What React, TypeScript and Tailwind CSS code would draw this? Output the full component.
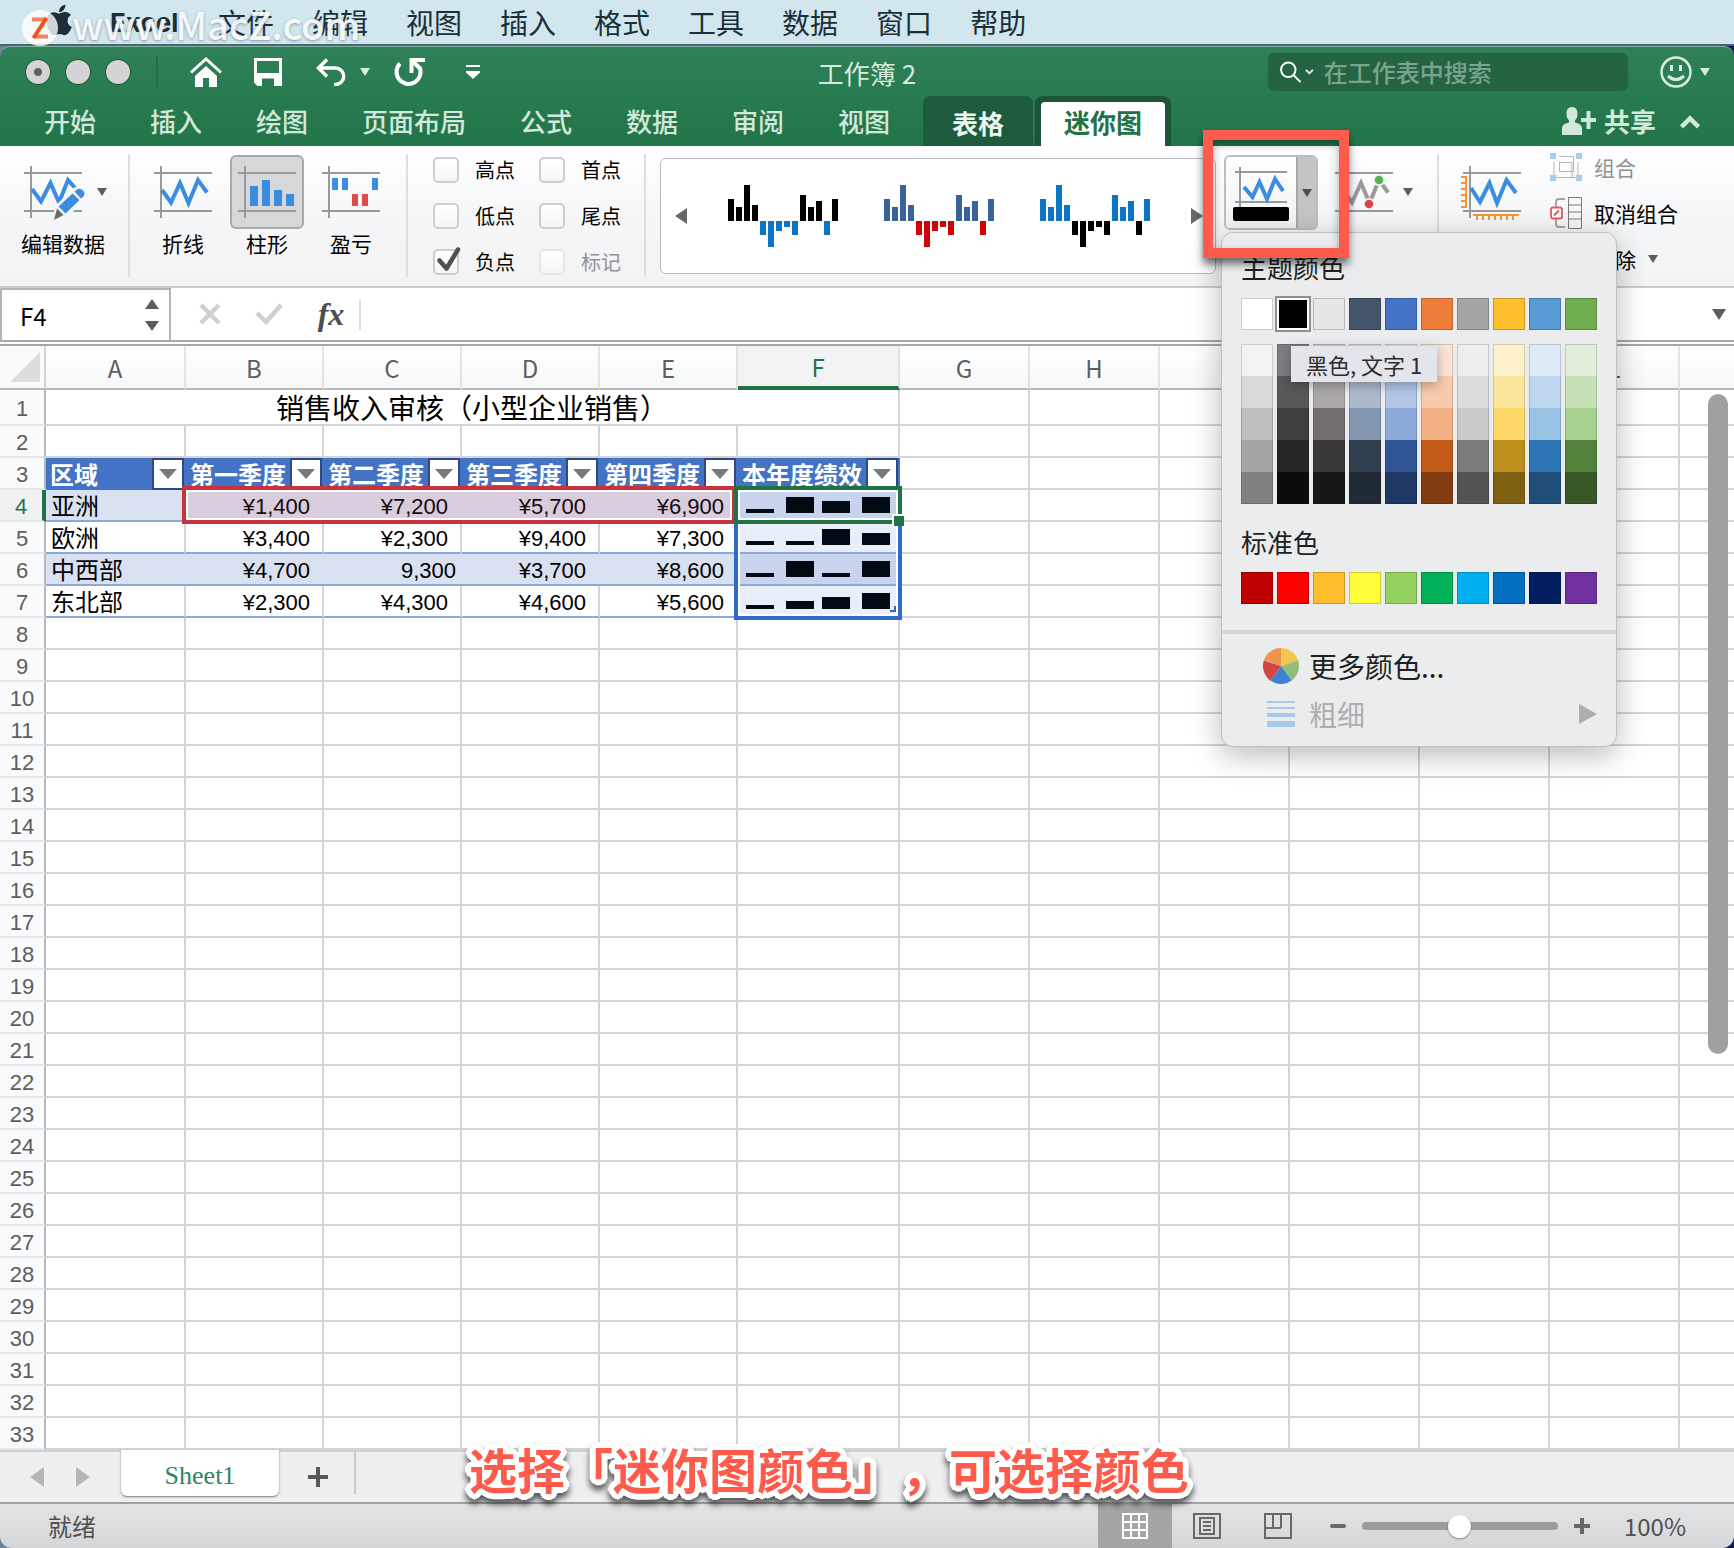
import React, { useState } from 'react';
import clsx from 'clsx';
import { FaApple } from 'react-icons/fa';

const menus = ['文件', '编辑', '视图', '插入', '格式', '工具', '数据', '窗口', '帮助'];
const ribbonTabs = ['开始', '插入', '绘图', '页面布局', '公式', '数据', '审阅', '视图'];

const columns = ['A', 'B', 'C', 'D', 'E', 'F', 'G', 'H', 'I', 'J', 'K', 'L', 'M', 'N', 'O', 'P', 'Q', 'R'];
const rowNumbers = Array.from({ length: 33 }, (_, i) => i + 1);
const tableHeaders = ['区域', '第一季度', '第二季度', '第三季度', '第四季度', '本年度绩效'];

interface SalesRow {
  region: string;
  values: string[];
  bars: number[]; // sparkline column heights
}

const sales: SalesRow[] = [
  { region: '亚洲', values: ['¥1,400', '¥7,200', '¥5,700', '¥6,900'], bars: [4, 16, 12, 16] },
  { region: '欧洲', values: ['¥3,400', '¥2,300', '¥9,400', '¥7,300'], bars: [4, 4, 16, 12] },
  { region: '中西部', values: ['¥4,700', '9,300', '¥3,700', '¥8,600'], bars: [4, 16, 4, 16] },
  { region: '东北部', values: ['¥2,300', '¥4,300', '¥4,600', '¥5,600'], bars: [4, 8, 12, 16] },
];

const themeColors = ['#ffffff', '#000000', '#e6e6e8', '#44546a', '#4472c4', '#ed7d38', '#a4a5a6', '#fdbf2b', '#5b9bd5', '#6fad4f'];
const themeShades = [
  ['#f1f2f4', '#d8d9db', '#bdbec0', '#a4a5a7', '#7f8081'],
  ['#7e7f81', '#57585a', '#3e3f41', '#252628', '#0b0c0e'],
  ['#cfcdcd', '#aca8a9', '#747071', '#3a3839', '#171618'],
  ['#d5dce4', '#acb9ca', '#8496b0', '#31404f', '#212b35'],
  ['#d9e2f3', '#b3c6e7', '#8eaadb', '#2e5496', '#1f3764'],
  ['#fbe4d5', '#f6caad', '#f3b083', '#c45a17', '#823c10'],
  ['#ecedee', '#dadbdc', '#c8c9ca', '#7b7c7d', '#525354'],
  ['#fef2cc', '#fbe59b', '#fdd869', '#bd901c', '#7e6010'],
  ['#deebf7', '#bdd7ee', '#9bc3e6', '#2d75b5', '#1f4e79'],
  ['#e1efda', '#c5e1b5', '#a7d18f', '#52823a', '#375726'],
];
const standardColors = ['#be0000', '#fd0000', '#fdbf2b', '#fefe3a', '#93d05d', '#02b057', '#02b0ef', '#026fc0', '#022060', '#7030a0'];

const galleryBars = [22, 14, 36, 16, -14, -26, -10, -6, -14, 26, 14, 20, -14, 22];
const galleryStyles = [
  { up: '#000000', down: '#0b74c4' },
  { up: '#3a6499', down: '#d00408' },
  { up: '#0b74c4', down: '#000000' },
];

function Caret({ className }: { className?: string }) {
  return (
    <svg viewBox="0 0 10 8" className={clsx('h-2 w-2.5', className)} fill="currentColor">
      <path d="M0 0h10L5 8z" />
    </svg>
  );
}

// Axis frame shared by the sparkline icons
function AxisIcon({ children }: { children: React.ReactNode }) {
  return (
    <svg viewBox="0 0 58 52" className="h-[52px] w-[58px] shrink-0 overflow-visible" fill="none">
      <path d="M0 7h58M0 45h58M7 0v52" stroke="#98999b" strokeWidth="2" />
      {children}
    </svg>
  );
}

function EditDataIcon() {
  return (
    <AxisIcon>
      <path d="M8 23l9 12.500L26.500 17 35 36.500 44 14l8 9" stroke="#3b8de0" strokeWidth="4" />
      <path d="M27 56l5-17 19-18h12v12L43 51z" fill="#f5f6f8" />
      <path d="M48.500 27.500l7 6.500L41.500 47.500l-7-7z" fill="#3b8de0" />
      <path d="M50.500 25.500l2-1.500a4.800 4.800 0 0 1 6.500 7l-2 1.500z" fill="#3b8de0" />
      <path d="M33 42.500l6.500 6.500L30 54z" fill="#6a6b6d" />
    </AxisIcon>
  );
}

function LineIcon() {
  return (
    <AxisIcon>
      <path d="M8 24l9 12.500L26 17l8.500 20L44 14l9 12.500" stroke="#3b8de0" strokeWidth="4" />
    </AxisIcon>
  );
}

function ColumnIcon() {
  return (
    <AxisIcon>
      <path d="M12 20h8v20h-8zM24 14h8v26h-8zM36 24h8v16h-8zM48 28h8v12h-8z" fill="#3b8de0" />
    </AxisIcon>
  );
}

function WinLossIcon() {
  return (
    <AxisIcon>
      <path d="M10 12h6v12h-6zM20 12h6v12h-6zM50 12h6v12h-6z" fill="#3b8de0" />
      <path d="M30 28h6v12h-6zM40 28h6v12h-6z" fill="#df4a4d" />
    </AxisIcon>
  );
}

function TypeButton({ label, active, children }: { label: string; active?: boolean; children: React.ReactNode }) {
  return (
    <button className="flex w-[74px] flex-col items-center">
      <span
        className={clsx(
          'flex h-[74px] w-full items-center justify-center rounded-md border-2',
          active ? 'border-[#a8a9ab] bg-[#d6d7d9]' : 'border-transparent'
        )}
      >
        {children}
      </span>
      <span className="text-[21px] leading-7">{label}</span>
    </button>
  );
}

function PointCheckbox({ label, defaultChecked, disabled }: { label: string; defaultChecked?: boolean; disabled?: boolean }) {
  return (
    <label className={clsx('flex h-[26px] items-center gap-4 text-xl leading-6', disabled && 'text-[#919294]')}>
      <span className="relative flex">
        <input
          type="checkbox"
          defaultChecked={defaultChecked}
          disabled={disabled}
          className="peer size-[26px] appearance-none rounded-[5px] border-2 border-[#cdced0] bg-linear-to-b from-white to-[#f4f5f7] disabled:border-[#e4e5e7]"
        />
        <svg viewBox="0 0 28 28" className="pointer-events-none absolute left-0 -top-0.5 hidden size-7 peer-checked:block" fill="none">
          <path d="M6.500 13.500l7 8L25 2.500" stroke="#4e4f51" strokeWidth="4.500" strokeLinecap="round" strokeLinejoin="round" />
        </svg>
      </span>
      {label}
    </label>
  );
}

function GallerySparkline({ up, down }: { up: string; down: string }) {
  return (
    <button>
      <svg viewBox="0 0 110 62" className="h-[62px] w-[110px]">
        {galleryBars.map((v, i) => (
          <rect key={i} x={i * 8} y={v > 0 ? 36 - v : 36} width="6" height={Math.abs(v)} fill={v > 0 ? up : down} />
        ))}
      </svg>
    </button>
  );
}

function ColorMenu() {
  return (
    <div className="absolute -left-[3px] top-[77px] z-20 w-[396px] rounded-xl border border-[#bfc0c2] bg-[#ebeced] pb-2 text-[#1e1f21] shadow-[0_8px_30px_rgba(0,0,0,0.28)]">
      <div className="px-[19px] pt-[18px]">
        <h3 className="text-[26px] leading-8">主题颜色</h3>
        <div className="mt-[15px] flex gap-1">
          {themeColors.map((c, i) => (
            <button
              key={c}
              aria-label={c}
              className={clsx(
                'size-8',
                i === 1 ? 'border-2 border-white outline-2 outline-[#8f9092]' : 'border border-black/20'
              )}
              style={{ backgroundColor: c }}
            />
          ))}
        </div>
        <div className="relative mt-3.5 flex gap-1">
          {themeShades.map((shades) => (
            <div key={shades[0]} className="flex w-8 flex-col">
              {shades.map((c) => (
                <button key={c} aria-label={c} className="h-8 border-x border-black/15 first:border-t last:border-b" style={{ backgroundColor: c }} />
              ))}
            </div>
          ))}
          <div role="tooltip" className="absolute left-[50px] top-0.5 flex h-9 w-[146px] items-center justify-center bg-[#e3e5ea] text-[22px] leading-7 text-[#2b2c2e] shadow-[0_3px_12px_rgba(0,0,0,0.3)]">
            黑色, 文字 1
          </div>
        </div>
        <h3 className="mt-[22px] text-[26px] leading-8">标准色</h3>
        <div className="mt-3.5 flex gap-1">
          {standardColors.map((c) => (
            <button key={c} aria-label={c} className="size-8 border border-black/20" style={{ backgroundColor: c }} />
          ))}
        </div>
      </div>
      <div className="mt-[26px] h-1 bg-[#d4d5d7]" />
      <button className="mt-2 flex h-12 w-full items-center gap-2.5 pl-[41px] text-[28px] leading-9">
        <svg viewBox="-18 -18 36 36" className="size-9">
          <path d="M0 0V-18A18 18 0 0 1 17.100-5.600z" fill="#f0c84e" />
          <path d="M0 0L17.100-5.600A18 18 0 0 1 10.600 14.600z" fill="#93be77" />
          <path d="M0 0L10.600 14.600A18 18 0 0 1-10.600 14.600z" fill="#3d82cf" />
          <path d="M0 0L-10.600 14.600A18 18 0 0 1-17.100-5.600z" fill="#d24545" />
          <path d="M0 0L-17.100-5.600A18 18 0 0 1 0-18z" fill="#ef9450" />
        </svg>
        更多颜色...
      </button>
      <button disabled className="flex h-12 w-full items-center gap-3.5 pl-[45px] pr-[19px] text-[28px] leading-9 text-[#adaeb0]">
        <svg viewBox="0 0 28 28" className="size-7" fill="#a9c9e8">
          <path d="M0 1h28v2H0zM0 7h28v2H0zM0 13h28v4H0zM0 21h28v6H0z" />
        </svg>
        粗细
        <svg viewBox="0 0 18 20" className="ml-auto h-5 w-[18px]" fill="currentColor">
          <path d="M0 0v20l18-10z" />
        </svg>
      </button>
    </div>
  );
}

function MenuBar() {
  return (
    <nav className="relative flex h-[46px] items-center gap-[38px] border-b-2 border-[#4b6280] bg-[#d1e6ed] pl-[46px] text-[28px] text-[#1c2f38]">
      <FaApple className="-mt-1 h-9 w-[26px]" />
      <a href="#" className="w-[70px] font-['Inter','Noto_Sans_CJK_SC',sans-serif] text-[26px] font-bold">Excel</a>
      {menus.map((m) => (
        <a key={m} href="#" className="leading-10">{m}</a>
      ))}
      {/* Site watermark */}
      <div className="pointer-events-none absolute left-[22px] top-0 flex items-center gap-3.5 text-white/90">
        <span className="mt-2 flex size-9 items-center justify-center rounded-full bg-white/80">
          <svg viewBox="0 0 18 22" className="h-[22px] w-[18px]" fill="none" stroke="#f4511e" strokeWidth="4">
            <path d="M1 2.500h14M3 19.500h14" opacity="0.7" />
            <path d="M15.500 1L2.500 21" />
          </svg>
        </span>
        <span className="text-[38px] leading-[48px] font-medium [text-shadow:0_1px_3px_rgba(60,80,90,0.5)]">www.MacZ.com</span>
      </div>
    </nav>
  );
}

function TitleBar() {
  return (
    <header className="overflow-hidden rounded-t-[10px] border-t border-[#7fb698] bg-linear-to-b from-[#2f8057] to-[#217548]">
      <div className="relative flex h-[49px] items-center text-white">
        <div className="flex items-center gap-4 pl-[26px]">
          <button aria-label="关闭" className="flex size-6 items-center justify-center rounded-full bg-[#d6d3d6] ring-1 ring-[#1d5b3c]">
            <span className="size-2 rounded-full bg-[#5e5f61]" />
          </button>
          <button aria-label="最小化" className="size-6 rounded-full bg-[#d6d3d6] ring-1 ring-[#1d5b3c]" />
          <button aria-label="缩放" className="size-6 rounded-full bg-[#d6d3d6] ring-1 ring-[#1d5b3c]" />
        </div>
        <div className="ml-[26px] h-8 w-0.5 bg-[#27694a]" />
        <button aria-label="主页" className="ml-8">
          <svg viewBox="0 0 32 30" className="h-[30px] w-8" fill="none">
            <path d="M1 15.500L16 2l15 13.500" stroke="#fff" strokeWidth="3" />
            <path d="M5 19L16 9l11 10v11h-8v-9h-6v9H5z" fill="#fff" />
          </svg>
        </button>
        <button aria-label="保存" className="ml-8">
          <svg viewBox="0 0 28 28" className="size-7" fill="none">
            <path d="M1.500 1.500h25v25H4l-2.500-2.500z" stroke="#fff" strokeWidth="3" />
            <path d="M2 15h24v11H2z" fill="#fff" />
            <path d="M8 28v-7.500h12V28h-3v-4h-4v4z" fill="#297b52" />
            <path d="M13 24h4v4h-4z" fill="#297b52" />
          </svg>
        </button>
        <button aria-label="撤销" className="ml-[34px]">
          <svg viewBox="0 0 30 28" className="h-7 w-[30px]" fill="none" stroke="#fff" strokeWidth="3.500">
            <path d="M11 1.500L2.500 10 11 18.500M3 10h16.500a8.200 8.200 0 0 1 0 16.500H18" />
          </svg>
        </button>
        <Caret className="ml-3.5 text-[#d9ebe0]" />
        <button aria-label="恢复" className="ml-6">
          <svg viewBox="0 0 32 30" className="h-[30px] w-8" fill="none" stroke="#fff" strokeWidth="4">
            <path d="M6 6.500a12 12 0 1 0 19.500 3.500" />
            <path d="M17.500 16V3H31" />
            <path d="M17.500 3l8 8" />
          </svg>
        </button>
        <button aria-label="自定义快速访问工具栏" className="ml-10">
          <svg viewBox="0 0 14 14" className="size-3.5" fill="#fff">
            <path d="M0 0h14v2H0zM0 6h14v1.500L7 14 0 7.500z" />
          </svg>
        </button>
        <div className="pointer-events-none absolute inset-0 flex items-center justify-center pt-0.5 text-[26px] text-[#d9ebe0]">工作簿 2</div>
        <label className="ml-auto mr-8 flex h-[38px] w-[360px] items-center gap-1 rounded-md bg-[#256443] pl-3">
          <svg viewBox="0 0 24 24" className="size-6" fill="none" stroke="#fff" strokeWidth="2.200">
            <circle cx="9.500" cy="9.500" r="8.300" />
            <path d="M15.500 15.500l8 8" />
          </svg>
          <svg viewBox="0 0 10 8" className="h-2 w-2.5" fill="none" stroke="#fff" strokeWidth="2">
            <path d="M1 1.500l4 4 4-4" />
          </svg>
          <input
            aria-label="搜索"
            placeholder="在工作表中搜索"
            className="ml-1.5 w-full bg-transparent text-2xl font-medium outline-none placeholder:text-[#7ba48d]"
          />
        </label>
        <button aria-label="反馈" className="flex items-center gap-2 pr-6 text-[#d9ebe0]">
          <svg viewBox="0 0 32 32" className="size-8" fill="none" stroke="currentColor" strokeWidth="2.500">
            <circle cx="16" cy="16" r="14.500" />
            <path d="M11.500 9v6M20.500 9v6M8 20q8 7 16 0" strokeWidth="3" />
          </svg>
          <Caret />
        </button>
      </div>
      <div className="flex h-[50px] items-end pl-[17px] text-[26px] leading-10 font-medium text-[#d3e8dc]">
        {ribbonTabs.map((t) => (
          <button key={t} className="px-[27px] pb-[5px]">{t}</button>
        ))}
        <button className="ml-1.5 h-full w-[110px] rounded-t-lg bg-[#1d5b3c] pt-1 font-bold text-[#ecf5f0]">表格</button>
        <div className="ml-0.5 h-full w-[136px] rounded-t-lg bg-[#1a5537] px-1.5 pt-1.5">
          <button className="h-full w-full rounded-t-sm bg-white pb-1 font-bold text-[#217346]">迷你图</button>
        </div>
        <button className="ml-auto flex items-center gap-2 pb-[5px] font-bold">
          <svg viewBox="0 0 34 28" className="h-7 w-[34px]" fill="currentColor">
            <path d="M10 0c4 0 5.500 3 5.500 7 0 3-1 5-2.500 6.500v2c4 1 7 2.500 7 6V28H0v-6.500c0-3.500 3-5 7-6v-2C5.500 12 4.500 10 4.500 7c0-4 1.500-7 5.500-7z" />
            <path d="M24.500 4h4v7H34v4h-5.500v7h-4v-7H19v-4h5.500z" />
          </svg>
          共享
        </button>
        <button aria-label="折叠功能区" className="mb-[17px] ml-6 mr-[34px]">
          <svg viewBox="0 0 20 14" className="h-3.5 w-5" fill="none" stroke="currentColor" strokeWidth="4.500">
            <path d="M1.500 12L10 3.500l8.500 8.500" />
          </svg>
        </button>
      </div>
    </header>
  );
}

function Ribbon() {
  return (
    <section className="flex h-[142px] shrink-0 border-b-2 border-[#cacbcd] bg-linear-to-b from-white via-[#f5f6f8] to-[#f2f3f5] pt-2 text-black">
      <button className="flex h-[123px] w-[130px] shrink-0 flex-col items-start border-r-2 border-[#dddee0] pl-[21px] pt-px">
        <span className="flex h-[74px] items-center gap-[15px] pl-[3px]">
          <EditDataIcon />
          <Caret className="text-[#5b5c5e]" />
        </span>
        <span className="text-[21px] leading-7">编辑数据</span>
      </button>

      <div className="flex h-[123px] w-[278px] shrink-0 items-start gap-2.5 border-r-2 border-[#dddee0] pl-4 pt-px">
        <TypeButton label="折线"><LineIcon /></TypeButton>
        <TypeButton label="柱形" active><ColumnIcon /></TypeButton>
        <TypeButton label="盈亏"><WinLossIcon /></TypeButton>
      </div>

      <div className="grid h-[123px] w-[238px] shrink-0 grid-cols-[106px_1fr] content-start gap-y-5 border-r-2 border-[#dddee0] pl-[25px] pt-[3px]">
        <PointCheckbox label="高点" />
        <PointCheckbox label="首点" />
        <PointCheckbox label="低点" />
        <PointCheckbox label="尾点" />
        <PointCheckbox label="负点" defaultChecked />
        <PointCheckbox label="标记" disabled />
      </div>

      <div className="ml-3.5 mr-2 mt-1 flex h-[116px] min-w-0 grow items-center justify-between rounded-md border border-[#b9babc] bg-white pl-3.5 pr-3 text-[#67686a]">
        <button aria-label="上一个">
          <svg viewBox="0 0 12 16" className="h-4 w-3" fill="currentColor"><path d="M12 0v16L0 8z" /></svg>
        </button>
        <div className="flex gap-[46px]">
          {galleryStyles.map((s) => (
            <GallerySparkline key={s.up} up={s.up} down={s.down} />
          ))}
        </div>
        <button aria-label="下一个">
          <svg viewBox="0 0 12 16" className="h-4 w-3" fill="currentColor"><path d="M0 0v16l12-8z" /></svg>
        </button>
      </div>

      {/* Sparkline colour split button with its open menu */}
      <div className="relative mt-px h-[75px] w-[94px] shrink-0">
        <div className="flex h-full overflow-hidden rounded-md border-2 border-[#bcbdbf]">
          <button aria-label="迷你图颜色" className="grow bg-linear-to-b from-white to-[#f0f1f3] pl-[7px]">
            <svg viewBox="0 0 56 56" className="size-14" fill="none">
              <path d="M2 7h52M2 37h52M7 2v40" stroke="#98999b" strokeWidth="2" />
              <path d="M11 22l8.500 10L26.500 17l7.500 17 8-20 8 12" stroke="#3b8de0" strokeWidth="4" />
              <rect y="42" width="56" height="14" rx="2" fill="#000" />
            </svg>
          </button>
          <button aria-label="打开颜色菜单" className="flex w-5 items-center justify-center border-l-2 border-[#a5a6a8] bg-[#c3c4c6] text-[#4b4c4e]">
            <Caret />
          </button>
        </div>
        <ColorMenu />
        <div className="pointer-events-none absolute -left-[21px] -top-[25px] z-30 h-32 w-[146px] border-10 border-[#fe5b4c] shadow-[0_6px_8px_rgba(0,0,0,0.55),inset_0_4px_8px_rgba(0,0,0,0.35)]" />
      </div>

      <button aria-label="标记颜色" className="ml-[17px] flex h-[76px] shrink-0 items-center gap-2.5">
        <AxisIcon>
          <path d="M8 24l9 12.500L26 17l8.500 20L44 14l9 12.500" stroke="#98999b" strokeWidth="4" />
          <circle cx="44" cy="14" r="6" fill="#f5f6f8" />
          <circle cx="34" cy="38" r="6" fill="#f5f6f8" />
          <circle cx="44" cy="14" r="4.300" fill="#55b455" />
          <circle cx="34" cy="38" r="4.300" fill="#dd4447" />
        </AxisIcon>
        <Caret className="text-[#5b5c5e]" />
      </button>
      <div className="ml-6 h-[123px] w-0.5 shrink-0 bg-[#dddee0]" />
      <button aria-label="坐标轴" className="ml-[22px] flex h-[78px] shrink-0 items-center">
        <svg viewBox="0 0 60 54" className="h-[54px] w-[60px]" fill="none">
          <path d="M2 7h58M2 45h58M9 0v52" stroke="#98999b" strokeWidth="2" />
          <path d="M10 22l9 14L28.500 17 36 37l9.500-23L55 27" stroke="#3b8de0" strokeWidth="4" />
          <path d="M5 10v32M0 11h5M0 17h5M0 23h5M0 29h5M0 35h5M0 41h5" stroke="#f79434" strokeWidth="2" />
          <path d="M12 49h46M16 49v5M22 49v5M28 49v5M34 49v5M40 49v5M46 49v5M52 49v5" stroke="#f79434" strokeWidth="2" />
        </svg>
      </button>
      <div className="ml-[29px] mr-14 flex shrink-0 flex-col gap-5 text-[21px] leading-[26px]">
        <button disabled className="flex h-[26px] items-center gap-3 text-[#919294]">
          <svg viewBox="0 0 32 28" className="h-7 w-8" fill="none">
            <path d="M9 3.500h14.500v15H9.500v-10M4 9v15.500h18V9.500H9M9 24.500h19V9" stroke="#b5b6b8" strokeWidth="1" />
            <path d="M0 0h6v6H0zM26 0h6v6h-6zM0 22h6v6H0zM26 22h6v6h-6z" fill="#a9cbed" />
          </svg>
          组合
        </button>
        <button className="flex h-[26px] items-center gap-3">
          <svg viewBox="0 0 32 32" className="size-8" fill="none">
            <path d="M15 2H9q-3 0-3 3v22q0 3 3 3h6" stroke="#a3a4a6" strokeWidth="2" />
            <path d="M18.500 .5h13v31h-13zM18.500 8h13M18.500 15h13M18.500 22h13" stroke="#77787a" />
            <rect x="1" y="10.500" width="11" height="11" rx="2" fill="#fff" stroke="#dd5b60" strokeWidth="1.800" />
            <path d="M4 18.500l5-5" stroke="#dd5b60" strokeWidth="2" />
          </svg>
          取消组合
        </button>
        <button className="flex h-[26px] items-center pl-[44px]">
          清除
          <Caret className="ml-3 text-[#5b5c5e]" />
        </button>
      </div>
    </section>
  );
}

function FormulaBar() {
  const [cell, setCell] = useState('F4');

  return (
    <section className="bg-white">
      <div className="flex h-[52px] items-stretch">
        <div className="flex w-[171px] items-center border-2 border-b-0 border-[#b4b5b7]">
          <input
            aria-label="名称框"
            value={cell}
            onChange={(e) => setCell(e.target.value)}
            className="w-[124px] pl-[18px] pt-0.5 text-2xl text-black outline-none"
          />
          <svg viewBox="0 0 14 32" className="ml-auto mr-2.5 h-8 w-3.5" fill="#5b5c5e">
            <path d="M0 10h14L7 0zM0 22h14l-7 10z" />
          </svg>
        </div>
        <button aria-label="取消" className="ml-7">
          <svg viewBox="0 0 22 22" className="size-[22px]" stroke="#cfd0d2" strokeWidth="4.500"><path d="M2 2l18 18M20 2L2 20" /></svg>
        </button>
        <button aria-label="输入" className="ml-[34px]">
          <svg viewBox="0 0 28 22" className="h-[22px] w-7" fill="none" stroke="#cfd0d2" strokeWidth="4.500"><path d="M2 10l9 9L26 2" /></svg>
        </button>
        <button aria-label="插入函数" className="ml-8 w-[32px] font-['Liberation_Serif',serif] text-[32px] font-bold italic leading-10 text-[#4b4c4e]">fx</button>
        <div className="ml-3 mt-3 h-[30px] w-0.5 bg-[#dddee0]" />
        <input aria-label="编辑栏" className="min-w-0 grow pl-3 text-2xl outline-none" />
        <svg viewBox="0 0 14 11" className="mr-2 h-[11px] w-3.5 self-center" fill="#5b5c5e"><path d="M0 0h14L7 11z" /></svg>
      </div>
      <div className="h-1.5 border-y-2 border-[#a6a7a9]" />
    </section>
  );
}

function RowHeader({ n }: { n: number }) {
  return (
    <th
      scope="row"
      className={clsx(
        "border-b-2 border-b-[#e6e7e9] px-0 pt-1 pb-0 text-center font-['Liberation_Sans',sans-serif] text-[22px] leading-6 font-normal",
        n === 4 ? 'border-r-4 border-r-[#217346] bg-[#f0f1f3] text-[#217346]' : 'border-r-2 border-r-[#b7b8ba] bg-[#f9fafb] text-[#5d5e60]'
      )}
    >
      {n}
    </th>
  );
}

function EmptyCells({ from }: { from: number }) {
  return (
    <>
      {columns.slice(from).map((c) => (
        <td key={c} className="border-r-2 border-b-2 border-[#d3d4d6]" />
      ))}
    </>
  );
}

function DataRow({ row, index }: { row: SalesRow; index: number }) {
  const banded = index % 2 === 0;
  return (
    <tr className={clsx('h-8', banded && '[&>td:nth-child(-n+6)]:bg-[#d9e1f1]')}>
      <RowHeader n={index + 4} />
      <td className={clsx('border-b-2 border-[#8ba8db] py-0 pr-0 pl-[5px] text-2xl leading-[30px]', !banded && 'border-r-2 border-r-[#d3d4d6]')}>{row.region}</td>
      {row.values.map((v, i) => (
        <td
          key={i}
          className={clsx(
            "border-b-2 border-[#8ba8db] pt-1 text-right font-['Liberation_Sans',sans-serif] text-[22px] leading-6",
            !banded && 'border-r-2 border-r-[#d3d4d6]',
            v.startsWith('¥') ? (banded ? 'pr-3.5' : 'pr-3') : 'pr-1.5'
          )}
        >
          {v}
        </td>
      ))}
      <td className={clsx('border-r-2 border-b-2 border-r-[#d3d4d6] border-b-[#8ba8db] p-0', banded ? 'bg-[#c8d4ee]' : 'bg-[#e8effa]')}>
        <svg viewBox="0 0 144 16" className="ml-2 h-4 w-36" fill="#020a14">
          {row.bars.map((h, i) => (
            <rect key={i} x={[0, 40, 76, 116][i]} y={16 - h} width="28" height={h} />
          ))}
        </svg>
      </td>
      <EmptyCells from={6} />
    </tr>
  );
}

function Sheet() {
  return (
    <main className="relative overflow-hidden bg-white">
      <table className="w-[2459px] table-fixed border-separate border-spacing-0 text-black">
        <colgroup>
          <col className="w-[46px]" />
          <col className="w-[140px]" />
          <col className="w-[138px]" />
          <col className="w-[138px]" />
          <col className="w-[138px]" />
          <col className="w-[138px]" />
          <col className="w-[162px]" />
          {columns.slice(6).map((c) => (
            <col key={c} className="w-[130px]" />
          ))}
        </colgroup>
        <thead>
          <tr className="h-11">
            <td className="border-r-2 border-b-2 border-r-[#d3d4d6] border-b-[#b7b8ba] bg-[#f9fafb] p-0">
              <svg viewBox="0 0 30 30" className="ml-2.5 size-[30px]" fill="#dcdddf"><path d="M30 0v30H0z" /></svg>
            </td>
            {columns.map((c) => (
              <th
                key={c}
                scope="col"
                className={clsx(
                  'border-r-2 border-r-[#e2e3e5] px-0 pt-0.5 pb-0 text-2xl leading-8 font-normal',
                  c === 'F'
                    ? 'border-b-4 border-b-[#217346] bg-[#f1f2f4] text-[#217346]'
                    : 'border-b-2 border-b-[#b7b8ba] bg-linear-to-b from-white to-[#f6f7f8] text-[#5d5e60]'
                )}
              >
                {c}
              </th>
            ))}
          </tr>
        </thead>
        <tbody>
          <tr className="h-9">
            <RowHeader n={1} />
            <td colSpan={6} className="border-r-2 border-b-2 border-[#d3d4d6] p-0 text-center text-[28px] leading-8">
              销售收入审核（小型企业销售）
            </td>
            <EmptyCells from={6} />
          </tr>
          <tr className="h-8">
            <RowHeader n={2} />
            <EmptyCells from={0} />
          </tr>
          <tr className="h-8">
            <RowHeader n={3} />
            {tableHeaders.map((h) => (
              <td key={h} className="bg-[#4472c4] p-0">
                <div className="flex h-8 items-center justify-between pr-0.5 pl-1 text-2xl leading-8 font-bold whitespace-nowrap text-white">
                  {h}
                  <button aria-label={`筛选${h}`} className="flex h-8 w-8 shrink-0 items-center justify-center border-2 border-[#2d4a80] bg-white">
                    <svg viewBox="0 0 18 10" className="h-2.5 w-[18px]" fill="#77787a"><path d="M0 0h18L9 10z" /></svg>
                  </button>
                </div>
              </td>
            ))}
            <EmptyCells from={6} />
          </tr>
          {sales.map((row, i) => (
            <DataRow key={row.region} row={row} index={i} />
          ))}
          {rowNumbers.slice(7).map((n) => (
            <tr key={n} className="h-8">
              <RowHeader n={n} />
              <EmptyCells from={0} />
            </tr>
          ))}
        </tbody>
      </table>

      {/* Range outlines: source data, sparkline group, active cell */}
      <div className="pointer-events-none absolute left-[182px] top-[140px] h-[38px] w-[554px] border-4 border-[#c8323c] bg-[#d04050]/12 shadow-[inset_0_0_0_2px_#fff]" />
      <div className="pointer-events-none absolute left-[734px] top-[140px] h-[134px] w-[168px] border-4 border-[#2f6acb] shadow-[inset_0_0_0_2px_#fff]" />
      <div className="pointer-events-none absolute left-[890px] top-[260px] h-1.5 w-1.5 border-r-2 border-b-2 border-[#3f5fb5]" />
      <div className="pointer-events-none absolute left-[734px] top-[140px] h-[38px] w-[168px] border-4 border-[#217346] shadow-[inset_0_0_0_2px_#fff]" />
      <div className="pointer-events-none absolute left-[892px] top-[168px] size-3 border-t-2 border-l-2 border-white bg-[#217346]" />

      <div className="absolute right-1.5 top-12 h-[660px] w-5 rounded-full bg-[#9fa0a2]" />
    </main>
  );
}

function SheetTabs() {
  return (
    <section className="relative flex h-[54px] border-t-2 border-b-2 border-t-[#d0d1d3] border-b-[#a0a1a3] bg-[#eeeff1]">
      <div className="flex items-center gap-8 pl-[30px] text-[#b5b6b8]">
        <button aria-label="上一张工作表">
          <svg viewBox="0 0 14 20" className="h-5 w-3.5" fill="currentColor"><path d="M14 0v20L0 10z" /></svg>
        </button>
        <button aria-label="下一张工作表">
          <svg viewBox="0 0 14 20" className="h-5 w-3.5" fill="currentColor"><path d="M0 0v20l14-10z" /></svg>
        </button>
      </div>
      <button className="-mt-0.5 ml-[31px] h-[46px] w-[158px] rounded-b-md bg-white pt-1 font-['Liberation_Serif',serif] text-[26px] text-[#2f855a] shadow-[0_1px_2px_rgba(0,0,0,0.5)]">
        Sheet1
      </button>
      <button aria-label="新建工作表" className="ml-[29px]">
        <svg viewBox="0 0 20 20" className="size-5" fill="#58595b"><path d="M8 0h4v8h8v4h-8v8H8v-8H0V8h8z" /></svg>
      </button>
      <div className="ml-[26px] h-[42px] w-0.5 bg-[#c9cacc]" />

      {/* Caption */}
      <p className="pointer-events-none absolute -top-[18px] left-[469px] z-30 text-5xl leading-[68px] font-bold whitespace-nowrap text-[#fe5b4c] drop-shadow-[0_5px_3px_rgba(0,0,0,0.65)] [text-spacing-trim:space-all] [text-shadow:6px_0_#fff,-6px_0_#fff,0_6px_#fff,0_-6px_#fff,4px_4px_#fff,-4px_4px_#fff,4px_-4px_#fff,-4px_-4px_#fff,5px_2px_#fff,5px_-2px_#fff,-5px_2px_#fff,-5px_-2px_#fff,2px_5px_#fff,-2px_5px_#fff,2px_-5px_#fff,-2px_-5px_#fff,3px_0_#fff,-3px_0_#fff,0_3px_#fff,0_-3px_#fff]">
        选择「迷你图颜色」，可选择颜色
      </p>
    </section>
  );
}

function StatusBar() {
  const [zoom, setZoom] = useState(50);

  return (
    <footer className="flex h-11 items-center rounded-b-xl bg-linear-to-b from-[#e3e4e6] to-[#d5d6d8] text-2xl text-[#4f5052]">
      <span className="pl-12">就绪</span>
      <div className="ml-auto flex h-full items-center">
        <button aria-label="普通视图" className="flex h-full w-[74px] items-center justify-center bg-[#a4a5a7]">
          <svg viewBox="0 0 26 26" className="size-[26px]" fill="none" stroke="#fff" strokeWidth="2">
            <path d="M1 1h24v24H1zM9 1v24M17 1v24M1 9h24M1 17h24" />
          </svg>
        </button>
        <button aria-label="页面布局视图" className="ml-[21px]">
          <svg viewBox="0 0 28 26" className="h-[26px] w-7" fill="none" stroke="#67686a" strokeWidth="2">
            <path d="M1 1h26v24H1zM7 5h14v16H7zM10 9h8M10 13h8M10 17h8" />
          </svg>
        </button>
        <button aria-label="分页预览" className="ml-[43px]">
          <svg viewBox="0 0 28 26" className="h-[26px] w-7" fill="none" stroke="#67686a" strokeWidth="2">
            <path d="M1 1h26v24H1zM9 1v14M17 1v14M1 15h16" />
          </svg>
        </button>
        <button aria-label="缩小" className="ml-[38px] h-1 w-4 rounded-sm bg-[#67686a]" />
        <input
          type="range"
          aria-label="缩放"
          value={zoom}
          onChange={(e) => setZoom(Number(e.target.value))}
          className="ml-4 h-2 w-[196px] appearance-none rounded-full bg-[#9b9c9e] [&::-webkit-slider-thumb]:size-[23px] [&::-webkit-slider-thumb]:appearance-none [&::-webkit-slider-thumb]:rounded-full [&::-webkit-slider-thumb]:bg-white [&::-webkit-slider-thumb]:shadow-[0_1px_2px_rgba(0,0,0,0.4)]"
        />
        <button aria-label="放大" className="ml-4">
          <svg viewBox="0 0 16 16" className="size-4" fill="#67686a"><path d="M6 0h4v6h6v4h-6v6H6v-6H0V6h6z" /></svg>
        </button>
        <span className="ml-[34px] mr-12">100%</span>
      </div>
    </footer>
  );
}

export default function App() {
  return (
    <div className="min-h-screen overflow-hidden bg-linear-to-r from-[#6d8496] to-[#141c50] font-['Noto_Sans_CJK_SC','Noto_Sans',sans-serif]">
      <MenuBar />
      <TitleBar />
      <Ribbon />
      <FormulaBar />
      <Sheet />
      <SheetTabs />
      <StatusBar />
    </div>
  );
}
